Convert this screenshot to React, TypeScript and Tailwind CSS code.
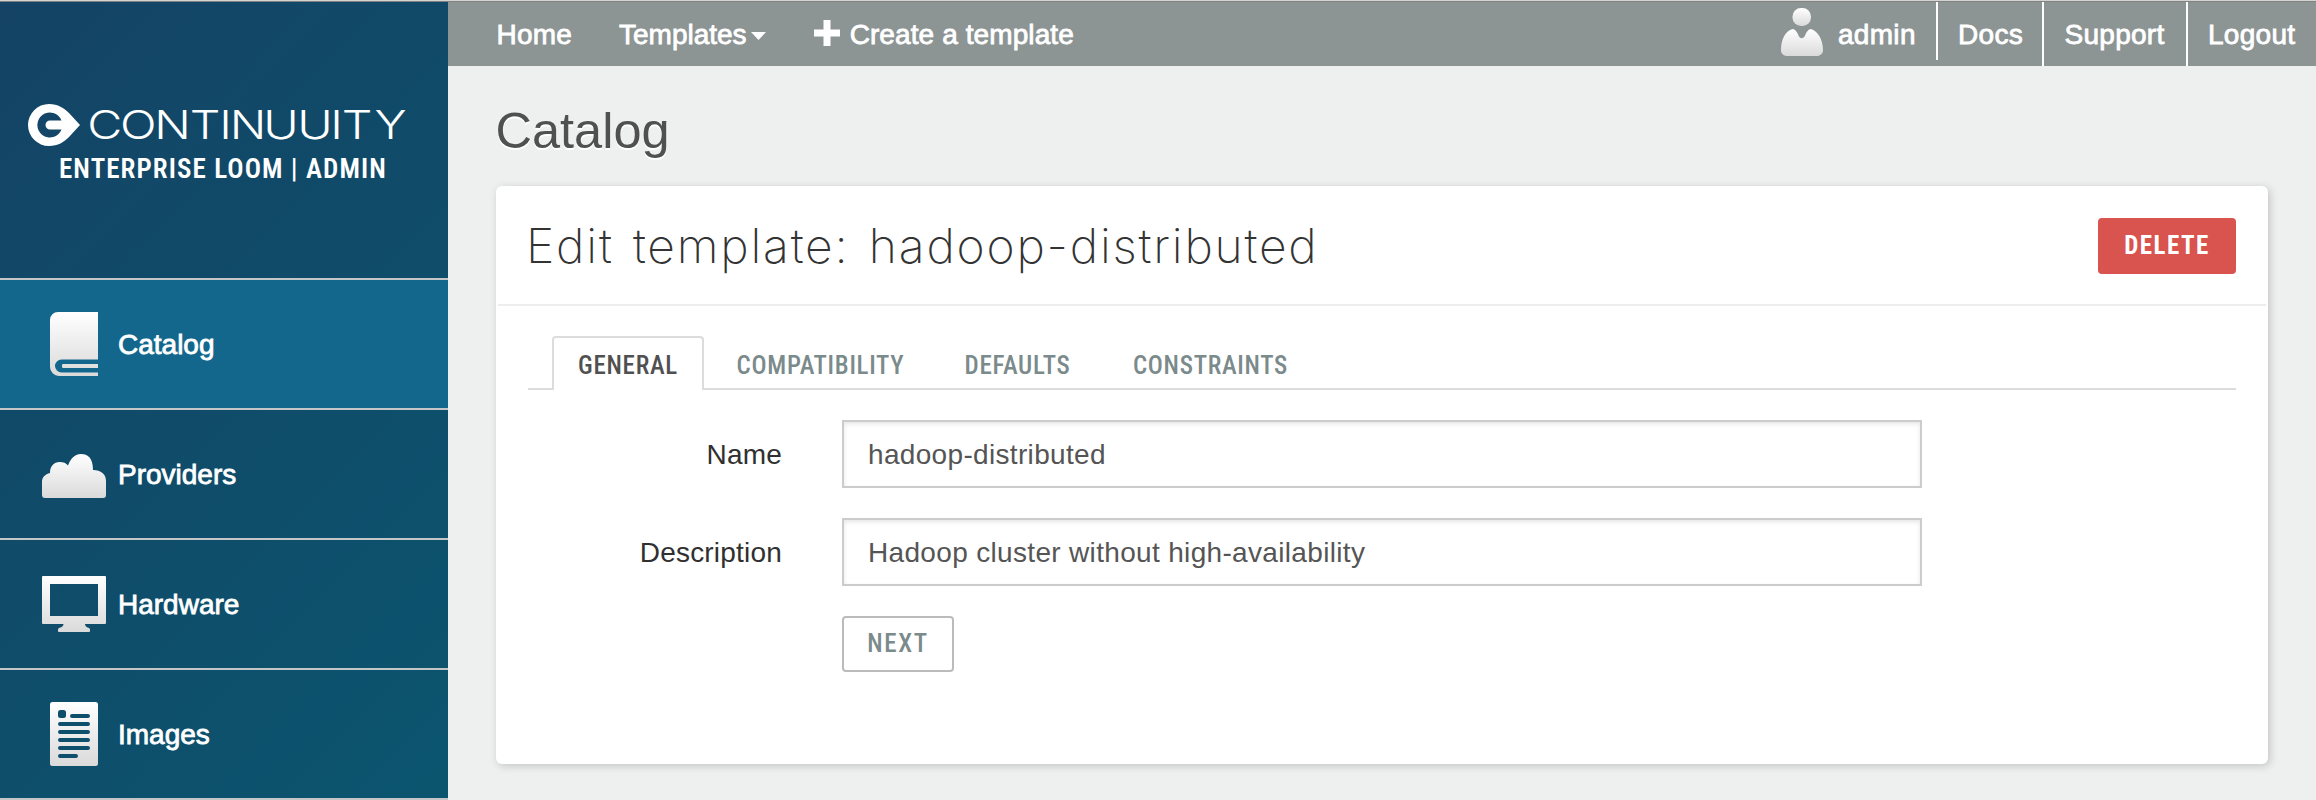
import React from 'react';

const ICON_FILL = 'url(#iconShade)';

function BookIcon() {
  return (
    <svg width="64" height="64" viewBox="0 0 64 64">
      <path
        fill={ICON_FILL}
        d="M16 0H56V47.500H19.500a6.500 6.500 0 0 0 0 13H56V64H17a9 9 0 0 1-9-9V8a8 8 0 0 1 8-8ZM21 52H56V56H21a1.500 1.500 0 0 1-1-1v-2a1.500 1.500 0 0 1 1-1Z"
      />
    </svg>
  );
}

function CloudIcon() {
  return (
    <svg width="64" height="64" viewBox="0 0 64 64">
      <path
        fill={ICON_FILL}
        d="M0 53V40C0 35 3 32.500 8 31C8 24 12 20 17.500 20C21.500 20 24 21 26 23.500C29 16 33 12 39 12C46 12 51 16 51 28C59 28 64 32 64 39V53a3 3 0 0 1-3 3H3a3 3 0 0 1-3-3Z"
      />
    </svg>
  );
}

function MonitorIcon() {
  return (
    <svg width="64" height="64" viewBox="0 0 64 64">
      <path
        fill={ICON_FILL}
        fillRule="evenodd"
        d="M1 4H63a1 1 0 0 1 1 1V51a1 1 0 0 1-1 1H43C43 54.500 45 55.500 47 56Q48 56.500 48 57.500V59a1 1 0 0 1-1 1H17a1 1 0 0 1-1-1V57.500Q16 56.500 17 56C19 55.500 21.500 54.500 21.500 52H1a1 1 0 0 1-1-1V5a1 1 0 0 1 1-1ZM8 12V44H56V12Z"
      />
    </svg>
  );
}

function DocumentIcon() {
  return (
    <svg width="64" height="64" viewBox="0 0 64 64">
      <path
        fill={ICON_FILL}
        fillRule="evenodd"
        d="M10.500 0H53.500A2.500 2.500 0 0 1 56 2.500V61.500A2.500 2.500 0 0 1 53.500 64H10.500A2.500 2.500 0 0 1 8 61.500V2.500A2.500 2.500 0 0 1 10.500 0ZM18.500 8a2.500 2.500 0 0 0-2.500 2.500v3a2.500 2.500 0 0 0 2.500 2.500h3a2.500 2.500 0 0 0 2.500-2.500v-3a2.500 2.500 0 0 0-2.500-2.500ZM30 12a2 2 0 0 0 0 4H46a2 2 0 0 0 0-4ZM18 20a2 2 0 0 0 0 4H46a2 2 0 0 0 0-4ZM18 28a2 2 0 0 0 0 4H46a2 2 0 0 0 0-4ZM18 36a2 2 0 0 0 0 4H46a2 2 0 0 0 0-4ZM18 44a2 2 0 0 0 0 4H46a2 2 0 0 0 0-4ZM18 52a2 2 0 0 0 0 4H34a2 2 0 0 0 0-4Z"
      />
    </svg>
  );
}

function UserIcon() {
  return (
    <svg width="42" height="48" viewBox="0 0 42 48">
      <rect x="11.500" y="0" width="18.500" height="18" rx="8.500" fill={ICON_FILL} />
      <path
        fill={ICON_FILL}
        d="M12 21C14.500 21.500 16 24 17.500 27.500C19 31 22.500 31 24 27.500C25.500 24 27 21.500 29.500 21C36 22 42 31 42 42C42 46 39 48 35 48H7C3 48 0 46 0 42C0 31 5 22 12 21Z"
      />
    </svg>
  );
}

function Logo() {
  return (
    <svg width="384" height="44" viewBox="0 0 384 44" className="overflow-visible">
      <path
        fill="#fff"
        fillRule="evenodd"
        d="M21 0C30 0 36 4 41 9L52 21L41 33C36 38 30 42 21 42A21 21 0 0 1 21 0ZM33.500 16.500A12.500 12.500 0 1 0 33.500 25.500H22a4.200 4.200 0 0 1 0-9Z"
      />
      <text
        transform="scale(1.22 1)"
        x="63 90.500 118.400 145.100 161.900 180.300 207.300 235.200 252.900 269.700 297.100"
        y="35"
        textAnchor="middle"
        fill="#fff"
        className="font-['Inter',sans-serif] text-[39.500px] font-light"
      >
        CONTINUUITY
      </text>
    </svg>
  );
}

const navItems = [
  { label: 'Catalog', Icon: BookIcon, active: true },
  { label: 'Providers', Icon: CloudIcon, active: false },
  { label: 'Hardware', Icon: MonitorIcon, active: false },
  { label: 'Images', Icon: DocumentIcon, active: false },
];

function Sidebar() {
  return (
    <aside className="flex w-[448px] shrink-0 flex-col bg-linear-[135deg,#144365,#0b556f]">
      <div className="flex h-[276px] flex-col pt-[102px] pl-7">
        <Logo />
        <div className="mt-[5px] pl-[31px] font-['Roboto_Condensed','Roboto',sans-serif] text-[27px] leading-[32px] font-semibold tracking-[1.080px] whitespace-nowrap text-white">
          ENTERPRISE LOOM | ADMIN
        </div>
      </div>
      <nav className="flex flex-col border-t-2 border-[#c4c6c7]">
        {navItems.map(({ label, Icon, active }) => (
          <a
            key={label}
            className={
              'flex h-[130px] items-center gap-3 border-b-2 border-[#c4c6c7] pl-[42px] text-[28px] text-white [-webkit-text-stroke:0.800px_white] ' +
              (active ? 'bg-[#13678d]' : '')
            }
          >
            <Icon />
            <span className="pt-0.5">{label}</span>
          </a>
        ))}
      </nav>
    </aside>
  );
}

function TopBar() {
  return (
    <header className="flex h-16 items-stretch bg-[#8c9494] text-[28px] leading-[66px] whitespace-nowrap text-white [-webkit-text-stroke:0.800px_white]">
      <span className="ml-[48.500px] tracking-[0.200px]">Home</span>
      <span className="ml-[47px]">Templates</span>
      <svg className="mt-[30px] ml-1" width="15" height="8" viewBox="0 0 15 8">
        <path d="M0 0H15L7.500 8Z" fill="#fff" />
      </svg>
      <svg className="mt-[18px] ml-12" width="26" height="26" viewBox="0 0 26 26">
        <path d="M9.500 0H16.500V9.500H26V16.500H16.500V26H9.500V16.500H0V9.500H9.500Z" fill="#fff" />
      </svg>
      <span className="ml-[10px] tracking-[0.100px]">Create a template</span>
      <div className="ml-auto flex items-start tracking-[0.300px]">
        <div className="flex h-[58px] w-[157px] border-r-2 border-white">
          <span className="mt-1.5">
            <UserIcon />
          </span>
          <span className="ml-[15px]">admin</span>
        </div>
        <span className="h-16 w-[106px] border-r-2 border-white pl-px text-center">Docs</span>
        <span className="h-16 w-[144px] border-r-2 border-white pr-px text-center">Support</span>
        <span className="h-16 w-32 pl-5">Logout</span>
      </div>
    </header>
  );
}

const CONDENSED = "font-['Roboto_Condensed','Roboto',sans-serif]";

function Tabs() {
  return (
    <div className={`mx-8 mt-[30px] flex h-[54px] items-end border-b-2 border-[#dcdcdc] pl-6 text-[25px] font-medium tracking-[0.700px] text-[#7b8a8b] ${CONDENSED}`}>
      <span className="-mb-0.5 h-[54px] w-[152px] rounded-t border-2 border-b-0 border-[#dcdcdc] bg-white pt-px text-center leading-[54px] text-[#505050]">
        GENERAL
      </span>
      <span className="w-[233px] text-center leading-[44px]">COMPATIBILITY</span>
      <span className="w-[161px] text-center leading-[44px]">DEFAULTS</span>
      <span className="w-[225px] text-center leading-[44px]">CONSTRAINTS</span>
    </div>
  );
}

function Field({ label, value }: { label: string; value: string }) {
  return (
    <div className="mb-[30px] flex h-[68px] items-center text-[28px]">
      <label className="w-[286px] pt-0.5 text-right tracking-[0.200px] text-[#303030]">{label}</label>
      <div className="ml-[60px] flex h-full w-[1080px] items-center border-2 border-[#cccccc] bg-white pt-0.5 pl-6 tracking-[0.330px] text-[#555] shadow-[inset_0_2px_4px_rgba(0,0,0,0.1)]">
        {value}
      </div>
    </div>
  );
}

export default function App() {
  return (
    <div className="flex h-[800px] w-[2316px] flex-col overflow-hidden bg-[#eef0ef] font-['Liberation_Sans',Arial,sans-serif]">
      <svg width="0" height="0" className="absolute">
        <defs>
          <linearGradient id="iconShade" x1="0" y1="0" x2="0" y2="1">
            <stop offset="0" stopColor="#ffffff" />
            <stop offset="1" stopColor="#dadada" />
          </linearGradient>
        </defs>
      </svg>
      <div className="h-px shrink-0 bg-[#d4d4d2]" />
      <div className="h-px shrink-0 bg-[#7f827f]" />
      <div className="flex flex-1">
        <Sidebar />
        <div className="flex flex-1 flex-col">
          <TopBar />
          <h1 className="mt-9 ml-[47.500px] text-[50.500px] leading-[58px] text-[#505050] [text-shadow:0_2px_0_#fff]">
            Catalog
          </h1>
          <main className="mt-[26px] ml-12 h-[578px] w-[1772px] rounded-md bg-white shadow-[2px_2px_8px_rgba(0,0,0,0.18)]">
            <div className="mx-0.5 flex h-[120px] items-center justify-between border-b-2 border-[#eeeeee] pr-[30px] pl-7">
              <h2 className="pt-0.5 font-['Inter',sans-serif] text-[48px] font-extralight tracking-[1.800px] text-[#333] [word-spacing:4px]">
                Edit template: hadoop-distributed
              </h2>
              <button className={`mt-0.5 h-14 w-[138px] rounded bg-[#d9534f] text-[25px] font-bold tracking-[1.500px] text-white ${CONDENSED}`}>
                DELETE
              </button>
            </div>
            <Tabs />
            <form className="pt-[30px]">
              <Field label="Name" value="hadoop-distributed" />
              <Field label="Description" value="Hadoop cluster without high-availability" />
              <button type="button" className={`ml-[346px] block h-14 w-28 rounded border-2 border-[#bbbbbb] bg-white text-[25px] font-medium tracking-[1.600px] text-[#7b8a8b] ${CONDENSED}`}>
                NEXT
              </button>
            </form>
          </main>
        </div>
      </div>
    </div>
  );
}
